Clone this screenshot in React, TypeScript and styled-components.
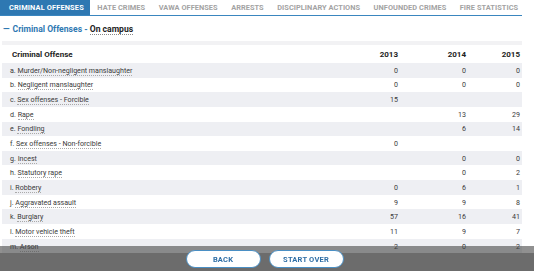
import styled, { createGlobalStyle } from 'styled-components'

const GlobalStyle = createGlobalStyle`
  body {
    margin: 0;
    background: #fff;
    font-family: Roboto, "Liberation Sans", Arial, sans-serif;
    color: #333;
  }
`

type Row = { label: string; y13?: number; y14?: number; y15?: number }

const tabs = [
  'CRIMINAL OFFENSES',
  'HATE CRIMES',
  'VAWA OFFENSES',
  'ARRESTS',
  'DISCIPLINARY ACTIONS',
  'UNFOUNDED CRIMES',
  'FIRE STATISTICS',
]

const rows: Row[] = [
  { label: 'a. |Murder/Non-negligent manslaughter', y13: 0, y14: 0, y15: 0 },
  { label: 'b. |Negligent manslaughter', y13: 0, y14: 0, y15: 0 },
  { label: 'c. |Sex offenses - Forcible', y13: 15 },
  { label: 'd. |Rape', y14: 13, y15: 29 },
  { label: 'e. |Fondling', y14: 6, y15: 14 },
  { label: 'f. |Sex offenses - Non-forcible', y13: 0 },
  { label: 'g. |Incest', y14: 0, y15: 0 },
  { label: 'h. |Statutory rape', y14: 0, y15: 2 },
  { label: 'i. |Robbery', y13: 0, y14: 6, y15: 1 },
  { label: 'j. |Aggravated assault', y13: 9, y14: 9, y15: 8 },
  { label: 'k. |Burglary', y13: 57, y14: 16, y15: 41 },
  { label: 'l. |Motor vehicle theft', y13: 11, y14: 9, y15: 7 },
  { label: 'm. |Arson', y13: 2, y14: 0, y15: 2 },
  { label: 'n. |Murder', y13: 0, y14: 0, y15: 0 },
]

const App = () => {
  return (
    <Page>
      <GlobalStyle />
      <Tabs>
        {tabs.map((t, i) => (
          <Tab key={t} active={i === 0}>{t}</Tab>
        ))}
      </Tabs>

      <Heading>
        <Dash>—</Dash>
        <Blue>Criminal Offenses - </Blue>
        <Campus>On campus</Campus>
      </Heading>

      <Band />

      <Table>
        <HeadRow>
          <Name>Criminal Offense</Name>
          <Num>2013</Num>
          <Num>2014</Num>
          <Num>2015</Num>
        </HeadRow>
        {rows.map((r, i) => {
          const [pre, name] = r.label.split('|')
          return (
            <BodyRow key={r.label} shaded={i % 2 === 0}>
              <Label>
                {pre}
                <Term>{name}</Term>
              </Label>
              <Val>{r.y13 ?? ''}</Val>
              <Val>{r.y14 ?? ''}</Val>
              <Val>{r.y15 ?? ''}</Val>
            </BodyRow>
          )
        })}
      </Table>

      <Footer>
        <Button>BACK</Button>
        <Button>START OVER</Button>
      </Footer>
    </Page>
  )
}

export default App

const Page = styled.div`
  width: 522px;
`
const Tabs = styled.div`
  display: flex;
  height: 15px;
  border-bottom: 1px solid #3a86bf;
`
const Tab = styled.div<{ active?: boolean }>`
  display: flex;
  align-items: center;
  padding: 0 6.5px 0 ${({ active }) => (active ? '9px' : '7px')};
  font-size: 7.4px;
  font-weight: 700;
  letter-spacing: ${({ active }) => (active ? '0.15px' : '0.05px')};
  white-space: nowrap;
  color: ${({ active }) => (active ? '#fff' : '#a3a3a3')};
  background: ${({ active }) => (active ? '#2e78b2' : 'transparent')};
`
const Heading = styled.div`
  display: flex;
  align-items: center;
  height: 24px;
  padding-left: 3px;
  padding-top: 1px;
  font-size: 8.6px;
  font-weight: 700;
`
const Dash = styled.span`
  color: #2e78b2;
  margin-right: 3px;
`
const Blue = styled.span`
  color: #2e78b2;
  white-space: pre;
`
const Campus = styled.span`
  color: #222;
  border-bottom: 1px dotted #888;
  line-height: 10px;
`
const Band = styled.div`
  height: 4px;
  margin-left: 2px;
  background: #f2f2f4;
`
const Table = styled.div`
  margin-left: 2px;
`
const HeadRow = styled.div`
  display: grid;
  grid-template-columns: 1fr 68px 68px 54px;
  align-items: center;
  height: 18px;
  padding: 0 2px 0 10px;
  font-size: 8px;
  font-weight: 700;
  color: #222;
`
const Name = styled.div``
const Num = styled.div`
  text-align: right;
`
const BodyRow = styled.div<{ shaded: boolean }>`
  display: grid;
  grid-template-columns: 1fr 68px 68px 54px;
  align-items: center;
  height: 14.65px;
  padding: 0 2px 0 8px;
  font-size: 7.1px;
  color: #3a3a3a;
  background: ${({ shaded }) => (shaded ? '#eeeff3' : '#fff')};
`
const Label = styled.div`
  white-space: nowrap;
`
const Term = styled.span`
  border-bottom: 1px dotted #aaa;
`
const Val = styled.div`
  text-align: right;
`
const Footer = styled.div`
  position: fixed;
  left: 0;
  right: 0;
  bottom: 0;
  height: 25px;
  display: flex;
  justify-content: center;
  align-items: center;
  gap: 8px;
  padding: 1px 5px 0 0;
  box-sizing: border-box;
  background: linear-gradient(rgba(70, 70, 70, 0.6) 0 7px, #6c6c6c 7px);
`
const Button = styled.div`
  width: 75px;
  height: 18px;
  box-sizing: border-box;
  display: flex;
  align-items: center;
  justify-content: center;
  border: 1px solid #4a8fc4;
  border-radius: 9px;
  background: #fff;
  color: #2e6ea6;
  font-size: 7.5px;
  font-weight: 700;
  letter-spacing: 0.2px;
`
